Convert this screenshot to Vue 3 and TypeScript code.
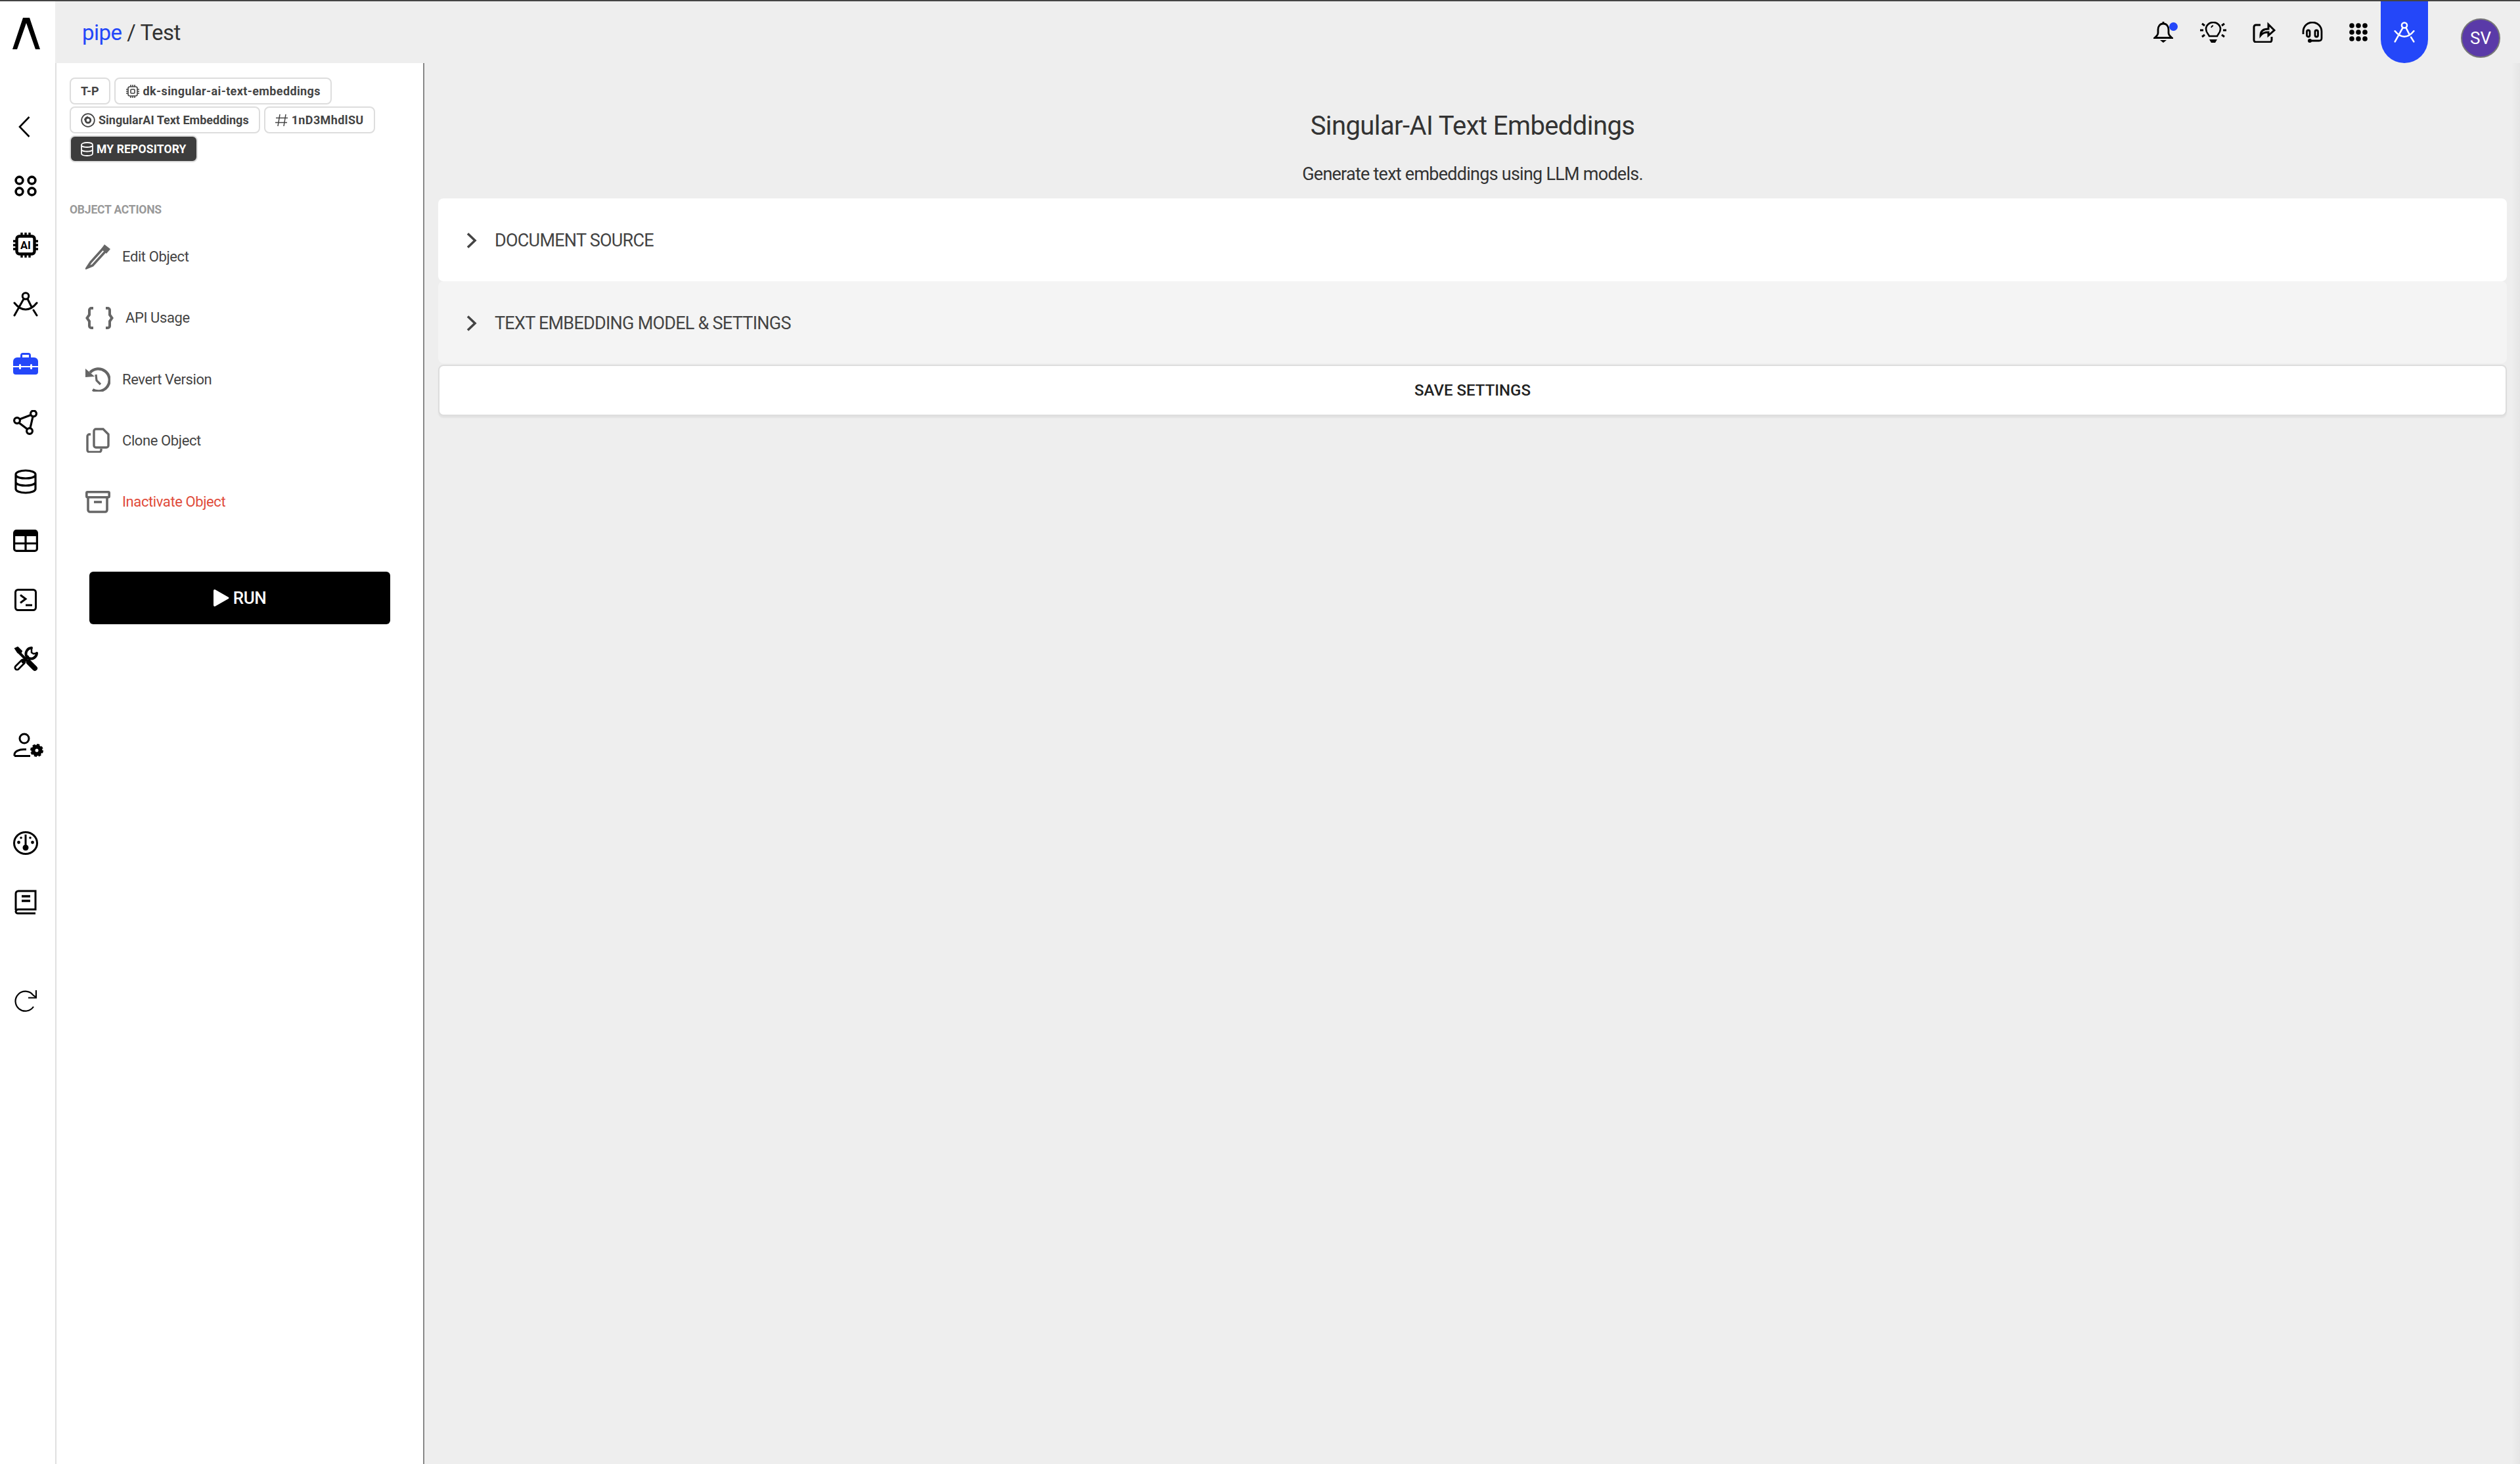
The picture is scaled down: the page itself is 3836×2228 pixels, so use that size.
<script setup lang="ts">
const menu: { label: string; key: string; danger?: boolean }[] = [
  { label: 'Edit Object', key: 'edit' },
  { label: 'API Usage', key: 'api' },
  { label: 'Revert Version', key: 'revert' },
  { label: 'Clone Object', key: 'clone' },
  { label: 'Inactivate Object', key: 'archive', danger: true },
]
const sections: string[] = ['DOCUMENT SOURCE', 'TEXT EMBEDDING MODEL & SETTINGS']
</script>

<template>
  <div class="app">
    <nav class="rail">
      <div class="logo">
        <svg width="42" height="48" viewBox="0 0 42 48"><path d="M0 48 L16 0 H26 L42 48 H35 L21 8 L7 48Z" fill="#000"/></svg>
      </div>
      <div class="slot slot-back"><svg width="18" height="32" viewBox="0 0 18 32" fill="none" stroke="#000" stroke-width="2.6"><path d="M16.5 1 L2 16 L16.5 31"/></svg></div>
      <div class="slot"><svg width="34" height="32" viewBox="0 0 34 32" fill="none" stroke="#000" stroke-width="3.6"><circle cx="7.5" cy="7.5" r="5.4"/><circle cx="26.5" cy="7.5" r="5.4"/><circle cx="7.5" cy="24.5" r="5.4"/><circle cx="26.5" cy="24.5" r="5.4"/></svg></div>
      <div class="slot"><svg width="38" height="38" viewBox="0 0 38 38" fill="none" stroke="#000" stroke-width="3.4"><rect x="5.5" y="5.5" width="27" height="27" rx="4" stroke-width="4.4"/><path d="M13 0v5M19 0v5M25 0v5M13 33v5M19 33v5M25 33v5M0 13h5M0 19h5M0 25h5M33 13h5M33 19h5M33 25h5"/><text x="19" y="25" text-anchor="middle" font-family="Roboto, sans-serif" font-weight="700" font-size="16.500" fill="#000" stroke="none">AI</text></svg></div>
      <div class="slot"><svg width="38" height="38" viewBox="0 0 38 38" fill="none" stroke="#000" stroke-width="3" stroke-linecap="round"><circle cx="19" cy="6.5" r="4.8"/><path d="M16 11 L2 36M22 11 L28 23M31 28 L36 36M2 17 Q10 27 19 27 Q28 27 36 17"/></svg></div>
      <div class="slot"><svg width="38" height="33" viewBox="0 0 38 33"><path d="M11 7V4a4 4 0 0 1 4-4h8a4 4 0 0 1 4 4v3h5a6 6 0 0 1 6 6v16a4 4 0 0 1-4 4H4a4 4 0 0 1-4-4V13a6 6 0 0 1 6-6z" fill="#2447f9"/><rect x="14" y="3" width="10" height="4" fill="#fff"/><rect x="0" y="20" width="38" height="2" fill="#fff"/><rect x="9" y="17" width="3" height="8" rx="1.5" fill="#fff"/><rect x="26" y="17" width="3" height="8" rx="1.5" fill="#fff"/></svg></div>
      <div class="slot"><svg width="38" height="38" viewBox="0 0 38 38" fill="none" stroke="#000" stroke-width="3.2"><circle cx="6" cy="16" r="4.4"/><circle cx="31" cy="5.5" r="4.4"/><circle cx="25" cy="32" r="4.4"/><path d="M10 14 L27 7.5M30 10 L26 27.5M9 19.5 L21.5 29"/></svg></div>
      <div class="slot"><svg width="34" height="38" viewBox="0 0 34 38" fill="none" stroke="#000" stroke-width="3.2"><path d="M2 8c0-3.5 6.5-6 15-6s15 2.500 15 6v22c0 3.500-6.500 6-15 6s-15-2.500-15-6z"/><path d="M2 10c3 3 9 4 15 4s12-1 15-4M2 21c3 3 9 4 15 4s12-1 15-4"/></svg></div>
      <div class="slot"><svg width="38" height="34" viewBox="0 0 38 34" fill="none" stroke="#000" stroke-width="3.2"><rect x="1.600" y="1.600" width="34.800" height="30.800" rx="3.500"/><rect x="1" y="1" width="36" height="9" rx="3" fill="#000" stroke="none"/><path d="M2 21H36M19 9V32"/></svg></div>
      <div class="slot"><svg width="34" height="34" viewBox="0 0 34 34" fill="none" stroke="#000" stroke-width="3"><rect x="1.500" y="1.500" width="31" height="31" rx="4"/><path d="M9 9.500 L17 15.500 L9 21.500M17 25H27"/></svg></div>
      <div class="slot"><svg width="38" height="38" viewBox="0 0 38 38" fill="none" stroke="#000" stroke-linecap="round"><path d="M3 3 L7 1 L13 7 L11 11 L7 9z" fill="#000" stroke-width="2"/><path d="M9 9 L24 24" stroke-width="4"/><path d="M24 24 L33 33" stroke-width="8"/><path d="M6 32 L15 23" stroke-width="9"/><path d="M6 32 L15 23" stroke-width="3.400" stroke="#fff"/><path d="M15 23 L22 16" stroke-width="5"/><path d="M28 2 A9 9 0 0 0 20 14M36 10 A9 9 0 0 1 24 18" stroke-width="4"/><path d="M28 2 V9 L31 11 L36 10" stroke-width="2.500"/></svg></div>
      <div class="slot slot-user"><svg width="46" height="37" viewBox="0 0 46 37" fill="none" stroke="#000" stroke-width="3"><circle cx="17" cy="9" r="7"/><path d="M2 35.500v-2c0-5 7-8 14-8h4M2 35.500H26"/><circle cx="36" cy="27" r="5.500" fill="none" stroke-width="6"/><circle cx="36" cy="27" r="8.500" stroke-width="3" stroke-dasharray="4 2.670"/></svg></div>
      <div class="slot slot-gap"><svg width="38" height="38" viewBox="0 0 38 38" fill="none" stroke="#000" stroke-width="3"><ellipse cx="19" cy="19" rx="17.500" ry="16.500"/><path d="M19 6V26" stroke-width="3"/><circle cx="19" cy="26" r="4.500" fill="#000" stroke="none"/><circle cx="8.500" cy="18" r="2.400" fill="#000" stroke="none"/><circle cx="29.500" cy="18" r="2.400" fill="#000" stroke="none"/><circle cx="12" cy="11" r="1.800" fill="#000" stroke="none"/><circle cx="26" cy="11" r="1.800" fill="#000" stroke="none"/></svg></div>
      <div class="slot"><svg width="34" height="38" viewBox="0 0 34 38" fill="none" stroke="#000" stroke-width="3"><path d="M2 31V6a4 4 0 0 1 4-4H32V30H6a4 4 0 0 0-4 3a3 3 0 0 0 3 3H32"/><path d="M11 10H24M11 17H24" stroke-width="3.400"/></svg></div>
      <div class="slot slot-gap"><svg width="34" height="34" viewBox="0 0 34 34" fill="none" stroke="#000" stroke-width="2.200"><path d="M29 26 A15 15 0 1 1 28 8 L33 12"/><path d="M33 1 V12.500 H21"/></svg></div>
    </nav>

    <div class="column">
      <header class="topbar">
        <div class="crumb"><span class="crumb-link">pipe</span> / Test</div>
        <div class="actions">
          <div class="bell">
            <svg width="30" height="32" viewBox="0 0 30 32" fill="none" stroke="#000" stroke-width="2.800"><path d="M15 3c-5 0-8 4-8 9v5c0 3-2 5-5 7.500H28c-3-2.500-5-4.500-5-7.500v-5c0-5-3-9-8-9z"/><path d="M15 0v3"/><path d="M10 28h10l-5 4z" fill="#000" stroke="none"/></svg>
            <span class="dot"></span>
          </div>
          <svg width="40" height="32" viewBox="0 0 40 32" fill="none" stroke="#000" stroke-width="2.600"><path d="M14 22c-1-3-5-5-5-11a11 10 0 0 1 22 0c0 6-4 8-5 11z"/><path d="M14 27h12l-3 5h-6z" fill="#000" stroke="none"/><path d="M17 9a4 4 0 0 1 3-3" stroke-width="1.800"/><path d="M3 3l4 3M37 3l-4 3M0 13h5M40 13h-5M3 23l4-3M37 23l-4-3" stroke-width="3"/></svg>
          <svg width="35" height="32" viewBox="0 0 35 32" fill="none" stroke="#000" stroke-width="3"><path d="M12 5H5a3 3 0 0 0-3 3v20a3 3 0 0 0 3 3h21a3 3 0 0 0 3-3v-5"/><path d="M12 21c0-7 5-10 12-10V4l9 9-9 8v-5c-6 0-9 1-12 5z"/></svg>
          <svg width="32" height="32" viewBox="0 0 32 32" fill="none" stroke="#000" stroke-width="2.800"><path d="M2 19v-4a14 14 0 0 1 28 0v10c0 3-2 4-4 4H14"/><rect x="7.500" y="13" width="4.500" height="10" rx="2.200"/><rect x="20" y="13" width="4.500" height="10" rx="2.200"/><circle cx="12" cy="29" r="3" fill="#000" stroke="none"/></svg>
          <svg width="28" height="28" viewBox="0 0 28 28" fill="#000"><circle cx="4" cy="4" r="3.800"/><circle cx="14" cy="4" r="3.800"/><circle cx="24" cy="4" r="3.800"/><circle cx="4" cy="14" r="3.800"/><circle cx="14" cy="14" r="3.800"/><circle cx="24" cy="14" r="3.800"/><circle cx="4" cy="24" r="3.800"/><circle cx="14" cy="24" r="3.800"/><circle cx="24" cy="24" r="3.800"/></svg>
          <div class="tab"><svg width="32" height="32" viewBox="0 0 38 38" fill="none" stroke="#fff" stroke-width="3" stroke-linecap="round"><circle cx="19" cy="6.500" r="4.800"/><path d="M16 11 L2 36M22 11 L28 23M31 28 L36 36M2 17 Q10 27 19 27 Q28 27 36 17"/></svg></div>
          <div class="avatar">SV</div>
        </div>
      </header>

      <div class="body">
        <aside class="panel">
          <div class="tags">
            <span class="tag">T-P</span>
            <span class="tag tag-wide"><svg width="22" height="22" viewBox="0 0 22 22" fill="none" stroke="#444" stroke-width="1.600"><rect x="4" y="4" width="14" height="14" rx="2.500"/><rect x="8" y="8" width="6" height="6" rx="1"/><path d="M8 1v3M11 1v3M14 1v3M8 18v3M11 18v3M14 18v3M1 8h3M1 11h3M1 14h3M18 8h3M18 11h3M18 14h3"/></svg>dk-singular-ai-text-embeddings</span>
            <span class="tag"><svg width="22" height="22" viewBox="0 0 22 22" fill="none" stroke="#444" stroke-width="1.800"><circle cx="11" cy="11" r="9.800"/><path d="M6 11a5 5 0 0 1 5-5" stroke-width="2"/><circle cx="11" cy="11" r="3.800" stroke-width="2.800"/></svg>SingularAI Text Embeddings</span>
            <span class="tag tag-wide"><svg width="20" height="20" viewBox="0 0 20 20" fill="none" stroke="#444" stroke-width="1.500"><path d="M7 1L4 19M16 1L13 19M1 6.500H19M0 13.500H18"/></svg>1nD3MhdlSU</span>
            <span class="tag tag-dark"><svg width="19" height="22" viewBox="0 0 19 22" fill="none" stroke="#fff" stroke-width="1.800"><path d="M1 4.500c0-2 3.500-3.500 8.500-3.500s8.500 1.500 8.500 3.500v13c0 2-3.500 3.500-8.500 3.500S1 19.500 1 17.500z"/><path d="M1 6c2 1.500 5 2 8.500 2s6.500-.5 8.500-2M1 12.500c2 1.500 5 2 8.500 2s6.500-.5 8.500-2"/></svg>MY REPOSITORY</span>
          </div>

          <div class="section-label">OBJECT ACTIONS</div>

          <ul class="menu">
            <li v-for="item in menu" :key="item.key" class="menu-row" :class="{ danger: item.danger }">
              <svg v-if="item.key === 'edit'" width="38" height="38" viewBox="0 0 38 38" fill="none" stroke="#666" stroke-width="3.600"><path d="M27 6 L8 27 L2.500 35.500 L11 32 L31 10z"/><path d="M29 0 L38 7 L32 14 L24 7z" fill="#666" stroke="none"/></svg>
              <svg v-else-if="item.key === 'api'" width="43" height="34" viewBox="0 0 43 34" fill="none" stroke="#666" stroke-width="4"><path d="M12 2H9a3 3 0 0 0-3 3V12l-3.500 5L6 22v7a3 3 0 0 0 3 3h3M31 2h3a3 3 0 0 1 3 3V12l3.500 5L37 22v7a3 3 0 0 1-3 3h-3"/></svg>
              <svg v-else-if="item.key === 'revert'" width="38" height="38" viewBox="0 0 38 38" fill="none" stroke="#666" stroke-width="4.200"><path d="M7 9A17 17 0 1 1 11 35"/><path d="M0 3 L0 16 L14 15z" fill="#666" stroke="none"/><path d="M16 12 L17 21 L23 27" stroke-width="3.200"/></svg>
              <svg v-else-if="item.key === 'clone'" width="38" height="38" viewBox="0 0 38 38" fill="none" stroke="#666" stroke-width="3.400"><path d="M13 5a3 3 0 0 1 3-3h11l8 8v17a3 3 0 0 1-3 3H16a3 3 0 0 1-3-3z"/><path d="M8 10H6a3 3 0 0 0-3 3v21a3 3 0 0 0 3 3h15a3 3 0 0 0 3-3v-2"/></svg>
              <svg v-else width="38" height="34" viewBox="0 0 38 34" fill="none" stroke="#666" stroke-width="3.600"><rect x="1.800" y="1.800" width="34.400" height="8" rx="1.500"/><path d="M4 10V29a3 3 0 0 0 3 3H30a3 3 0 0 0 3-3V10"/><path d="M13 17H25"/></svg>
              <span>{{ item.label }}</span>
            </li>
          </ul>

          <button class="run" type="button">
            <svg width="24" height="26" viewBox="0 0 24 26"><path d="M0 2 Q0 0 2 0 L23 12 Q24 13 23 14 L2 26 Q0 26 0 24z" fill="#fff"/></svg>RUN
          </button>
        </aside>

        <main class="main">
          <h1 class="title">Singular-AI Text Embeddings</h1>
          <p class="subtitle">Generate text embeddings using LLM models.</p>
          <section v-for="(s, i) in sections" :key="s" class="acc" :class="{ alt: i === 1 }">
            <svg width="16" height="24" viewBox="0 0 16 24" fill="none" stroke="#444" stroke-width="3.600"><path d="M2 1.500 L13 12 L2 22.500"/></svg>
            <span>{{ s }}</span>
          </section>
          <button class="save" type="button">SAVE SETTINGS</button>
        </main>
      </div>
    </div>
  </div>
</template>

<style scoped>
.app {
  display: flex;
  height: 2226px;
  border-top: 2px solid #444;
  background: #fff;
  font-family: Roboto, "Liberation Sans", sans-serif;
  overflow: hidden;
}
.rail { width: 84px; flex: none; display: flex; flex-direction: column; align-items: center; background: #fff; }
.logo { height: 98px; margin-bottom: 48px; padding-right: 4px; display: flex; align-items: center; justify-content: center; }
.slot { height: 90px; width: 84px; flex: none; display: flex; align-items: center; justify-content: center; padding-right: 6px; box-sizing: border-box; }
.slot-back { padding-right: 10px; }
.slot-user { margin-top: 40px; padding-right: 0; padding-left: 2px; }
.slot-gap { margin-top: 60px; }
.column { flex: 1; display: flex; flex-direction: column; min-width: 0; }
.topbar { height: 94px; flex: none; background: #eee; display: flex; align-items: flex-start; justify-content: space-between; }
.crumb { margin: 28px 0 0 41px; font-size: 33px; line-height: 40px; color: #333; letter-spacing: -0.5px; }
.crumb-link { color: #2447f9; }
.actions { display: flex; align-items: center; gap: 40px; height: 94px; padding-right: 30px; }
.bell { position: relative; width: 30px; height: 32px; margin-left: -2px; margin-right: 1px; }
.bell svg { display: block; }
.dot { position: absolute; left: 24px; top: 1px; width: 13px; height: 13px; border-radius: 50%; background: #2447f9; }
.tab { width: 72px; height: 94px; margin-left: -20px; background: #2447f9; border-radius: 0 0 36px 36px; display: flex; align-items: center; justify-content: center; }
.avatar { width: 60px; height: 60px; margin-left: 10px; margin-top: 18px; border-radius: 50%; border: 2px solid #777; box-sizing: border-box; background: #5a3aa8; color: #fff; font-size: 26px; display: flex; align-items: center; justify-content: center; }
.body { flex: 1; display: flex; min-height: 0; }
.panel { width: 562px; flex: none; box-sizing: border-box; border-left: 2px solid #e0e0e0; border-right: 2px solid #888; padding: 22px 0 0 20px; background: #fff; }
.tags { display: flex; flex-wrap: wrap; gap: 3px 6px; width: 500px; }
.tag { height: 41px; box-sizing: border-box; border: 2px solid #ddd; border-radius: 8px; padding: 0 15px; display: inline-flex; align-items: center; gap: 5px; font-size: 18px; font-weight: 700; color: #444; background: #fff; white-space: nowrap; }
.tag-wide { letter-spacing: 0.38px; }
.tag-dark { background: #3d3d3d; color: #fff; font-size: 17.5px; letter-spacing: 0.15px; }
.section-label { margin-top: 60px; font-size: 17.500px; line-height: 24px; font-weight: 700; color: #999; letter-spacing: -0.2px; }
.menu { list-style: none; margin: 13px 0 0; padding: 0 0 0 24px; }
.menu-row { height: 93.250px; display: flex; align-items: center; gap: 18px; font-size: 22px; color: #444; letter-spacing: -0.4px; }
.danger { color: #e04b3a; }
.run { margin: 60px 0 0 30px; width: 458px; height: 80px; border: 0; border-radius: 6px; background: #000; color: #fff; font-family: inherit; font-size: 26px; font-weight: 500; letter-spacing: -0.4px; display: flex; align-items: center; justify-content: center; gap: 6px; padding: 0; }
.main { flex: 1; position: relative; background: #eee; padding: 66px 20px 0 21px; min-width: 0; }
.main::after { content: ""; position: absolute; top: 0; right: 0; bottom: 0; width: 13px; background: linear-gradient(90deg, rgba(0,0,0,0), rgba(0,0,0,.035)); }
.title { margin: 0; text-align: center; font-size: 40px; line-height: 60px; font-weight: 400; color: #333; letter-spacing: -0.6px; }
.subtitle { margin: 23px 0 17px; text-align: center; font-size: 27px; line-height: 40px; color: #333; letter-spacing: -0.75px; }
.acc { height: 126px; box-sizing: border-box; background: #fff; border-radius: 8px; padding: 2px 0 0 43px; display: flex; align-items: center; gap: 27px; font-size: 27px; color: #444; letter-spacing: -0.75px; }
.acc.alt { height: 125px; background: #f4f4f4; }
.save { display: block; width: 100%; height: 78px; margin-top: 2px; box-sizing: border-box; border: 2px solid #ddd; border-radius: 8px; background: #fff; box-shadow: 0 3px 2px rgba(0,0,0,.05); font-family: inherit; font-size: 24px; font-weight: 500; color: #222; padding: 0; }
</style>

<style>
html, body { margin: 0; background: #eee; }
</style>
